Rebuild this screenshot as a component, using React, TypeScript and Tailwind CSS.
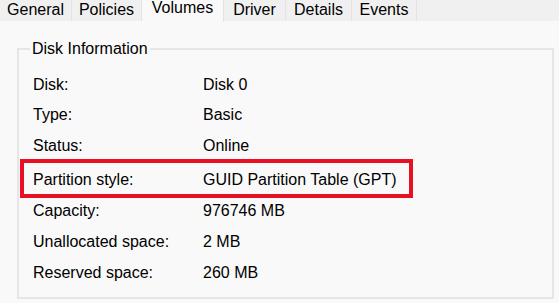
const tabs = [
  { name: "General", w: "w-[72px]" },
  { name: "Policies", w: "w-[70px]" },
  { name: "Volumes", w: "w-[82px]", active: true },
  { name: "Driver", w: "w-[62px]" },
  { name: "Details", w: "w-[66px]" },
  { name: "Events", w: "w-[65px]" },
];

const rows = [
  ["Disk:", "Disk 0"],
  ["Type:", "Basic"],
  ["Status:", "Online"],
  ["Partition style:", "GUID Partition Table (GPT)"],
  ["Capacity:", "976746 MB"],
  ["Unallocated space:", "2 MB"],
  ["Reserved space:", "260 MB"],
];

export default function App() {
  return (
    <div className="h-[303px] w-[559px] overflow-hidden bg-[#f9f9f9] font-['Liberation_Sans',Arial,sans-serif] text-[16px] text-black">
      <div className="flex h-[21px] bg-[#f0f0f0]">
        {tabs.map((t) => (
          <div
            key={t.name}
            className={`flex shrink-0 items-start justify-center border-r border-[#e3e3e3] leading-none ${t.w} ${
              t.active ? "h-[22px] bg-[#f9f9f9] pt-0" : "pt-[2px]"
            }`}
          >
            {t.name}
          </div>
        ))}
      </div>

      <fieldset className="mx-[17px] mt-[18px] h-[260px] w-[537px] border-2 border-[#e6e6e6]">
        <legend className="ml-[11px] px-[2px] leading-[20px]">Disk Information</legend>
        <div className="mt-[10px] flex flex-col pl-[14px]">
          {rows.map(([label, value], i) => {
            const hl = label === "Partition style:";
            return (
              <div
                key={label}
                className={`relative flex items-center ${i > 0 && i < 3 ? "h-[30.5px]" : "h-[31px]"} ${hl ? "mt-[3px]" : ""}`}
              >
                {hl && (
                  <div className="absolute left-[-13px] top-[-5px] h-[39px] w-[393px] border-4 border-[#e81123]" />
                )}
                <span className="w-[170px]">{label}</span>
                <span>{value}</span>
              </div>
            );
          })}
        </div>
      </fieldset>
    </div>
  );
}
